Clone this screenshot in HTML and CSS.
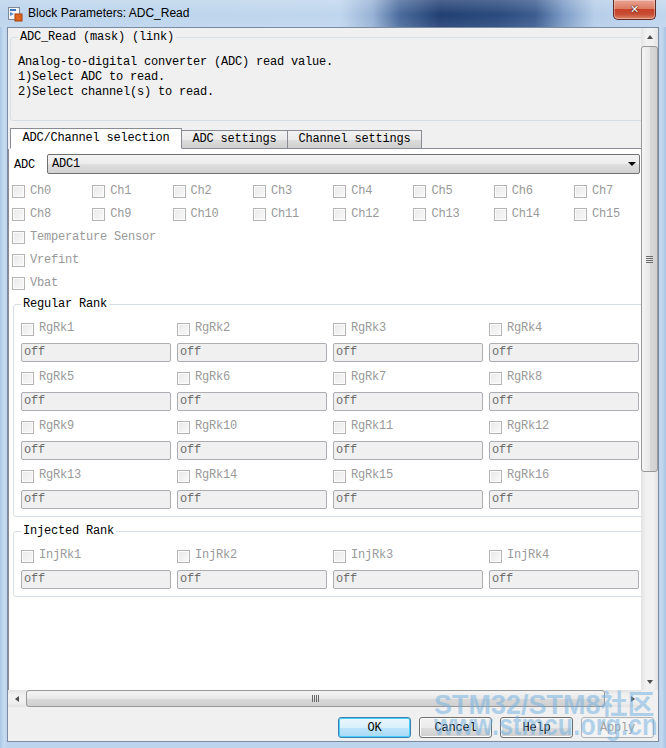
FILE: index.html
```html
<!DOCTYPE html>
<html lang="en">
<head>
  <meta charset="UTF-8">
  <title>Block Parameters: ADC_Read</title>
  <link rel="stylesheet" href="styles.css">
</head>
<body>
  <div class="window">
    <div class="titlebar">
      <svg class="app-icon" width="16" height="16" viewBox="0 0 16 16">
        <rect x="1.5" y="1.5" width="11" height="12" fill="#f4f6f9" stroke="#7d8796"/>
        <path d="M3 3h6v2H3z" fill="#3f74b8"/>
        <path d="M3 6l4 2-4 2z" fill="#5a8ccc"/>
        <rect x="8" y="8" width="7" height="7" fill="#e0641e" stroke="#a8400c"/>
      </svg>
      <span class="title">Block Parameters: ADC_Read</span>
      <div class="close-btn"><span>&#x2715;</span></div>
    </div>

    <div class="client">
      <div class="scroller">
        <div class="viewport">
          <div class="page">
            <fieldset class="desc">
              <legend>ADC_Read (mask) (link)</legend>
              <p>Analog-to-digital converter (ADC) read value.</p>
              <p>1)Select ADC to read.</p>
              <p>2)Select channel(s) to read.</p>
            </fieldset>

            <div class="tabs">
              <div class="tab active">ADC/Channel selection</div>
              <div class="tab">ADC settings</div>
              <div class="tab">Channel settings</div>
              <div class="tab-fill"></div>
            </div>

            <div class="panel">
              <div class="adc-row">
                <span class="adc-label">ADC</span>
                <div class="combo"><span>ADC1</span><i class="arrow-down"></i></div>
              </div>

              <div class="ch-grid">
                <label class="check"><span class="cb"></span>Ch0</label>
                <label class="check"><span class="cb"></span>Ch1</label>
                <label class="check"><span class="cb"></span>Ch2</label>
                <label class="check"><span class="cb"></span>Ch3</label>
                <label class="check"><span class="cb"></span>Ch4</label>
                <label class="check"><span class="cb"></span>Ch5</label>
                <label class="check"><span class="cb"></span>Ch6</label>
                <label class="check"><span class="cb"></span>Ch7</label>
                <label class="check"><span class="cb"></span>Ch8</label>
                <label class="check"><span class="cb"></span>Ch9</label>
                <label class="check"><span class="cb"></span>Ch10</label>
                <label class="check"><span class="cb"></span>Ch11</label>
                <label class="check"><span class="cb"></span>Ch12</label>
                <label class="check"><span class="cb"></span>Ch13</label>
                <label class="check"><span class="cb"></span>Ch14</label>
                <label class="check"><span class="cb"></span>Ch15</label>
              </div>
              <div class="single">
                <label class="check"><span class="cb"></span>Temperature Sensor</label>
                <label class="check"><span class="cb"></span>Vrefint</label>
                <label class="check"><span class="cb"></span>Vbat</label>
              </div>

              <fieldset class="group">
                <legend>Regular Rank</legend>
                <div class="rank-grid">
                  <div class="rank"><label class="check"><span class="cb"></span>RgRk1</label><div class="field">off</div></div>
                  <div class="rank"><label class="check"><span class="cb"></span>RgRk2</label><div class="field">off</div></div>
                  <div class="rank"><label class="check"><span class="cb"></span>RgRk3</label><div class="field">off</div></div>
                  <div class="rank"><label class="check"><span class="cb"></span>RgRk4</label><div class="field">off</div></div>
                  <div class="rank"><label class="check"><span class="cb"></span>RgRk5</label><div class="field">off</div></div>
                  <div class="rank"><label class="check"><span class="cb"></span>RgRk6</label><div class="field">off</div></div>
                  <div class="rank"><label class="check"><span class="cb"></span>RgRk7</label><div class="field">off</div></div>
                  <div class="rank"><label class="check"><span class="cb"></span>RgRk8</label><div class="field">off</div></div>
                  <div class="rank"><label class="check"><span class="cb"></span>RgRk9</label><div class="field">off</div></div>
                  <div class="rank"><label class="check"><span class="cb"></span>RgRk10</label><div class="field">off</div></div>
                  <div class="rank"><label class="check"><span class="cb"></span>RgRk11</label><div class="field">off</div></div>
                  <div class="rank"><label class="check"><span class="cb"></span>RgRk12</label><div class="field">off</div></div>
                  <div class="rank"><label class="check"><span class="cb"></span>RgRk13</label><div class="field">off</div></div>
                  <div class="rank"><label class="check"><span class="cb"></span>RgRk14</label><div class="field">off</div></div>
                  <div class="rank"><label class="check"><span class="cb"></span>RgRk15</label><div class="field">off</div></div>
                  <div class="rank"><label class="check"><span class="cb"></span>RgRk16</label><div class="field">off</div></div>
                </div>
              </fieldset>

              <fieldset class="group">
                <legend>Injected Rank</legend>
                <div class="rank-grid">
                  <div class="rank"><label class="check"><span class="cb"></span>InjRk1</label><div class="field">off</div></div>
                  <div class="rank"><label class="check"><span class="cb"></span>InjRk2</label><div class="field">off</div></div>
                  <div class="rank"><label class="check"><span class="cb"></span>InjRk3</label><div class="field">off</div></div>
                  <div class="rank"><label class="check"><span class="cb"></span>InjRk4</label><div class="field">off</div></div>
                </div>
              </fieldset>
            </div>
          </div>
        </div>

        <div class="vbar">
          <div class="sb-btn"><i class="arrow-up"></i></div>
          <div class="vthumb"><i class="grip-h"></i></div>
          <div class="sb-track"></div>
          <div class="sb-btn"><i class="arrow-down small"></i></div>
        </div>
        <div class="hbar">
          <div class="sb-btn"><i class="arrow-left"></i></div>
          <div class="hthumb"><i class="grip-v"></i></div>
          <div class="sb-track"></div>
          <div class="sb-btn"><i class="arrow-right"></i></div>
        </div>
        <div class="corner"></div>
      </div>

      <div class="buttons">
        <button class="btn default">OK</button>
        <button class="btn">Cancel</button>
        <button class="btn">Help</button>
        <button class="btn" disabled>Apply</button>
      </div>
    </div>

    <div class="watermark">
      <div class="wm-top">STM32/STM8社区</div>
      <div class="wm-bottom">www.stmcu.org.cn</div>
    </div>
  </div>
</body>
</html>
```

FILE: styles.css
```css
/* Dialog frame */
* { box-sizing: border-box; }
body { margin: 0; background: #bcd4ec; font-family: "Liberation Mono", "DejaVu Sans Mono", monospace; font-size: 12px; letter-spacing: -0.2px; color: #000; }

.window {
  position: relative;
  width: 666px; height: 748px;
  display: flex; flex-direction: column;
  overflow: hidden;
  background: linear-gradient(90deg, #a9c6e6 0, #c6dbf0 4px, #bcd4ec 7px, #bcd4ec 658px, #c3d8ee 662px, #a7c3e3 666px);
}

.titlebar {
  height: 27px;
  display: flex; align-items: flex-start;
  background:
    linear-gradient(rgba(255,255,255,0.18), rgba(255,255,255,0) 55%, rgba(255,255,255,0.08)),
    linear-gradient(90deg, #bcd4ec 0, #c0d6ee 340px, #98b3d6 372px, #4a6a9c 400px, #223f73 440px, #2a4a7e 500px, #3c5c90 535px, #7f9ec8 565px, #b6cee9 595px, #c0d6ee 666px);
}
.app-icon { margin: 6px 0 0 7px; flex: none; }
.title {
  margin: 5px 0 0 5px;
  font-family: "Liberation Sans", Arial, sans-serif; font-size: 12px; letter-spacing: 0;
  line-height: 16px;
}
.close-btn {
  margin: 0 10px 0 auto;
  width: 43px; height: 20px;
  border: 1px solid #5e2a22; border-top: none;
  border-radius: 0 0 5px 5px;
  background: linear-gradient(#e9a493 0, #dc7c65 45%, #c8432a 50%, #c64d34 75%, #e0866b 100%);
  box-shadow: inset 0 0 0 1px rgba(255,255,255,0.35);
  display: flex; align-items: center; justify-content: center;
}
.close-btn span {
  color: #fff; font-family: "DejaVu Sans", sans-serif; font-size: 11px; font-weight: bold;
  text-shadow: 0 0 1px #3a1008, 0 0 2px #3a1008;
}

.client {
  flex: 1;
  margin: 0 7px 6px;
  border: 1px solid #7b8ba0;
  background: #f0f0f0;
  display: flex; flex-direction: column;
}

/* Scrolled parameter area */
.scroller {
  height: 679px;
  display: grid;
  grid-template-columns: 633px 17px;
  grid-template-rows: 662px 17px;
}
.viewport { overflow: hidden; }
.page {
  width: 655px; height: 100%;
  padding: 2px 0 0 1px;
  display: flex; flex-direction: column;
}

fieldset {
  margin: 0; min-width: 0;
  border: 1px solid #d5dfe5; border-radius: 3px;
}
legend { padding: 0 2px; line-height: 15px; }

.desc { margin-left: 1px; padding: 10px 7px 20px; }
.desc p { margin: 0; line-height: 15px; white-space: pre; }

/* Tab strip */
.tabs { display: flex; align-items: flex-end; margin: 7px 0 0 1px; }
.tab {
  height: 19px;
  border: 1px solid #898c95;
  border-left: none;
  background: linear-gradient(#f2f2f2 0, #ebebeb 50%, #dddddd 51%, #cfcfcf 100%);
  text-align: center; line-height: 17px;
}
.tab:nth-child(2) { width: 106px; }
.tab:nth-child(3) { width: 134px; }
.tab.active {
  width: 172px; height: 21px;
  border-left: 1px solid #898c95;
  border-bottom-color: #fff;
  background: #fff;
  line-height: 19px;
}
.tab-fill { flex: 1; height: 1px; background: #898c95; }

.panel {
  flex: 1;
  margin-left: -1px;
  background: #fff;
  border-left: 1px solid #898c95;
  border-right: 1px solid #898c95;
}

.adc-row { display: flex; align-items: center; margin-top: 5px; padding-left: 5px; }
.adc-label { width: 33px; padding-top: 1px; }
.combo {
  width: 593px; height: 20px;
  border: 1px solid #707070; border-radius: 2px;
  background: linear-gradient(#f3f3f3 0, #ececec 50%, #dfdfdf 51%, #d2d2d2 100%);
  display: flex; align-items: center; justify-content: space-between;
  padding: 0 3px 0 4px;
}

/* Checkboxes */
.check { display: flex; align-items: center; color: #999; white-space: nowrap; }
.cb {
  width: 13px; height: 13px; flex: none;
  margin: 2px 5px 0 0;
  border: 1px solid #b4b4b4;
  background: linear-gradient(135deg, #e9e9e9, #f9f9f9);
  box-shadow: inset 0 0 0 1px #fbfbfb;
}
.ch-grid {
  display: grid;
  grid-template-columns: repeat(8, 80.3px);
  grid-auto-rows: 23px;
  margin-top: 5px; padding-left: 3px;
}
.single { padding-left: 3px; }
.single .check { height: 23px; }

.group { margin: 3px 0 0 4px; padding: 9px 7px 7px; }
.group + .group { margin-top: 7px; }
.rank-grid {
  display: grid;
  grid-template-columns: repeat(4, 150px);
  column-gap: 6px; row-gap: 8px;
}
.rank .check { height: 13px; margin-bottom: 9px; }
.rank .cb { margin-top: 4px; }
.field {
  height: 19px;
  border: 1px solid #abadb3; border-radius: 2px;
  background: #f0f0f0;
  color: #6d6d6d;
  padding-left: 2px; line-height: 17px;
}

/* Scroll bars */
.vbar, .hbar { display: flex; background: linear-gradient(90deg, #e3e3e3, #f1f1f1 30%, #f1f1f1 70%, #e3e3e3); }
.vbar { flex-direction: column; }
.hbar { background: linear-gradient(#e3e3e3, #f1f1f1 30%, #f1f1f1 70%, #e3e3e3); }
.sb-btn { width: 17px; height: 17px; flex: none; display: flex; align-items: center; justify-content: center; }
.sb-track { flex: 1; }
.vthumb {
  height: 426px; margin: 1px 0 0 0;
  border: 1px solid #979797; border-radius: 3px;
  background: linear-gradient(90deg, #f5f5f5 0, #e8e8e8 50%, #d9d9d9 51%, #d0d0d0 100%);
  display: flex; align-items: center; justify-content: center;
}
.hthumb {
  width: 579px; margin-left: 1px;
  border: 1px solid #979797; border-radius: 3px;
  background: linear-gradient(#f5f5f5 0, #e8e8e8 50%, #d9d9d9 51%, #d0d0d0 100%);
  display: flex; align-items: center; justify-content: center;
}
.corner { background: #f0f0f0; }

.grip-h { width: 7px; height: 7px; background: repeating-linear-gradient(#6a6a6a 0 1px, transparent 1px 2px); }
.grip-v { width: 7px; height: 7px; background: repeating-linear-gradient(90deg, #6a6a6a 0 1px, transparent 1px 2px); }

.arrow-down { width: 0; height: 0; border-left: 4px solid transparent; border-right: 4px solid transparent; border-top: 4px solid #000; }
.arrow-down.small, .arrow-up { border-left-width: 3.5px; border-right-width: 3.5px; }
.arrow-down.small { border-top-color: #4d4d4d; }
.arrow-up { width: 0; height: 0; border-left: 3.5px solid transparent; border-right: 3.5px solid transparent; border-bottom: 4px solid #4d4d4d; }
.arrow-left { width: 0; height: 0; border-top: 3.5px solid transparent; border-bottom: 3.5px solid transparent; border-right: 4px solid #4d4d4d; }
.arrow-right { width: 0; height: 0; border-top: 3.5px solid transparent; border-bottom: 3.5px solid transparent; border-left: 4px solid #4d4d4d; }

/* Dialog buttons */
.buttons { flex: 1; display: flex; justify-content: flex-end; align-items: flex-start; gap: 8px; padding: 10px 4px 0 0; }
.btn {
  width: 73px; height: 21px; padding: 0;
  font: inherit; letter-spacing: -0.2px; color: #000;
  border: 1px solid #707070; border-radius: 3px;
  background: linear-gradient(#f2f2f2 0, #ebebeb 50%, #dddddd 51%, #cfcfcf 100%);
  box-shadow: inset 0 0 0 1px #fcfcfc;
}
.btn.default {
  border-color: #3c7fb1;
  background: linear-gradient(#eaf6fd 0, #d9f0fc 50%, #bee6fd 51%, #a7d9f5 100%);
  box-shadow: inset 0 0 0 1px #48d0fa;
}
.btn:disabled {
  color: #a0a0a0; border-color: #adb2b5;
  background: #f4f4f4; box-shadow: none;
}

/* Site stamp over the lower corner */
.watermark {
  position: absolute; left: 434px; top: 691px;
  color: rgba(110, 175, 225, 0.5);
  font-family: "Liberation Sans", "Noto Sans CJK SC", sans-serif; font-weight: bold;
  letter-spacing: 0; pointer-events: none;
}
.wm-top { font-size: 27px; line-height: 28px; white-space: nowrap; }
.wm-bottom { margin-top: -8px; font-size: 29px; line-height: 28px; white-space: nowrap; transform: scaleX(0.87); transform-origin: left; }
```
